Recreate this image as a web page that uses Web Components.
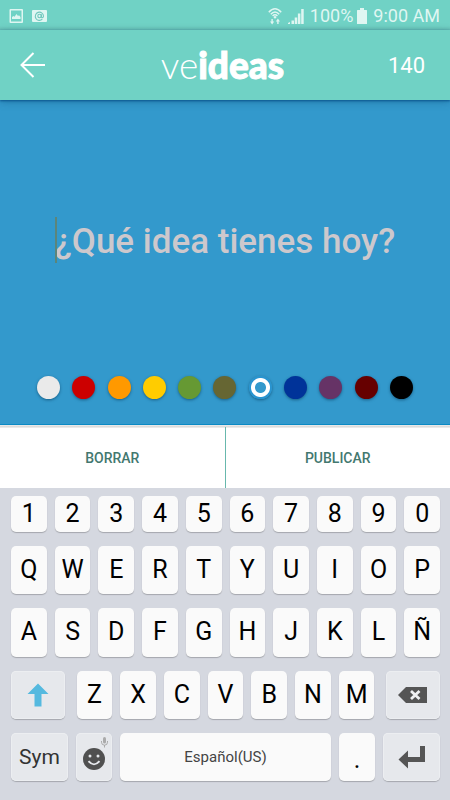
<!DOCTYPE html>
<html lang="es">
<head>
<meta charset="utf-8">
<meta name="viewport" content="width=device-width, initial-scale=1">
<title>veideas</title>
<style>
  html, body { height: 100%; margin: 0; }
  body { font-family: Roboto, "Liberation Sans", sans-serif; background: #d5d8e0; }
</style>
</head>
<body>
<idea-app></idea-app>

<template id="status-bar">
  <style>
    :host { display: flex; align-items: center; gap: 6px; height: 30px; padding: 1px 10px 0 9px; box-sizing: border-box; background: linear-gradient(#70d2c5 26px, #68bfb4); color: #dff6f2; font-size: 18px; line-height: 30px; white-space: nowrap; }
    svg { display: block; flex: none; }
    .mail { margin-left: 2px; }
    .push { margin-left: auto; }
    .pct { display: flex; align-items: center; gap: 4px; }
  </style>
  <svg width="15" height="16" viewBox="0 0 15 16"><path fill="#dff6f2" fill-rule="evenodd" d="M1.500 1h11.500a1 1 0 0 1 1 1v12a1 1 0 0 1-1 1H1.500a1 1 0 0 1-1-1V2a1 1 0 0 1 1-1zM2 2.500v11h10.500v-11z"/><path fill="#dff6f2" d="M3 11V9l1.500-1 1 .8L7.500 6l1.500 2 1-.8L11.500 9v2z"/></svg>
  <svg class="mail" width="15" height="14" viewBox="0 0 15 14"><rect y="1" width="15" height="12" rx="1" fill="#dff6f2"/><path fill="none" stroke="#70c8bd" stroke-width="1.100" d="M10.300 10.200A4.100 4.100 0 1 1 11.500 7c0 1.900-2.100 2.300-2.100.6V5.300"/><circle cx="7.500" cy="7" r="1.700" fill="none" stroke="#70c8bd" stroke-width="1.100"/></svg>
  <svg class="push" width="14" height="18" viewBox="0 0 14 18"><g fill="none" stroke="#dff6f2" stroke-width="1.500"><path d="M.8 5.300Q7-1.600 13.200 5.300M2.800 7.200Q7 2.600 11.200 7.200M4.600 9Q7 6.600 9.400 9"/></g><circle cx="7" cy="10.300" r="1.200" fill="#dff6f2"/><path fill="#dff6f2" d="M3.400 12h1.400v2.500h1.400L4.100 17.500 2 14.500h1.400zM9.200 17h1.400v-2.500H12L9.900 11.500 7.800 14.500h1.400z" /></svg>
  <svg width="16" height="16" viewBox="0 0 16 16" fill="#dff6f2"><path d="M0 16v-1l2-1v2zM3.500 12.500h2.500V16H3.500zM6.700 9.500h2.500V16H6.700zM9.900 5.500h2.500v10.500H9.900zM13.200 1h2.500v15h-2.500z"/></svg>
  <span class="pct">100%<svg width="10" height="16" viewBox="0 0 10 16"><path fill="#dff6f2" d="M3 0h4v2h2.500q.5 0 .5.500V16H0V2.500Q0 2 .5 2H3z"/></svg></span>
  <time>9:00 AM</time>
</template>

<template id="app-header">
  <style>
    :host { display: grid; grid-template-columns: 1fr auto 1fr; align-items: center; height: 70px; box-sizing: border-box; padding: 0 25px 0 20px; background: #70d2c5; color: #fff; position: relative; box-shadow: 0 1px 2px #0a5590, 0 2px 8px rgba(0,50,90,.3); }
    button { all: unset; cursor: pointer; width: 26px; height: 26px; }
    svg { display: block; }
    h1 { margin: 0; font: 300 37px/40px Lato, sans-serif; }
    h1 b { font-weight: 900; -webkit-text-stroke: 1px #fff; }
    output { justify-self: end; font-size: 22px; line-height: 26px; padding-top: 2px; }
  </style>
  <button type="button" aria-label="Volver"><svg width="26" height="26" viewBox="0 0 26 26" fill="none" stroke="#fff" stroke-width="2"><path d="M25 13H1.500M13.500 1L1.500 13l12 12"/></svg></button>
  <h1>ve<b>ideas</b></h1>
  <output aria-label="Caracteres restantes">140</output>
</template>

<template id="color-picker">
  <style>
    :host { display: block; }
    fieldset { border: 0; margin: 0; padding: 0; min-width: 0; display: flex; justify-content: space-between; }
    input { appearance: none; box-sizing: border-box; width: 23px; height: 23px; margin: 0; border-radius: 50%; background: var(--c); box-shadow: 0 1px 3px rgba(0,50,80,.55); }
    input:checked { background: radial-gradient(circle, #3399cc 5px, #fff 6px, #fff 9px, #2994d0 10px); }
  </style>
  <fieldset aria-label="Color de fondo"></fieldset>
</template>

<template id="idea-canvas">
  <style>
    :host { display: flex; flex-direction: column; height: 325px; box-sizing: border-box; padding: 0 37px 25px; background: #3399cc; border-bottom: 1px solid #0b8ac4; }
    .entry { flex: 1; display: flex; align-items: center; justify-content: center; padding-top: 8px; }
    .field { position: relative; width: 100%; }
    input { display: block; width: 100%; box-sizing: border-box; border: 0; padding: 0; background: none; outline: 0; text-align: center; font: 500 35px/46px Roboto, sans-serif; height: 46px; color: #fff; }
    input::placeholder { color: #cdc8cc; opacity: 1; }
    .caret { position: absolute; left: 18px; bottom: 2px; width: 2px; height: 46px; background: #5c8579; }
  </style>
  <div class="entry"><div class="field"><input type="text" maxlength="140" aria-label="Tu idea" placeholder="¿Qué idea tienes hoy?"><span class="caret"></span></div></div>
  <color-picker></color-picker>
</template>

<template id="action-bar">
  <style>
    :host { display: flex; height: 63px; box-sizing: border-box; padding-top: 2px; background: linear-gradient(#eee, #d5d5d5 2px, #fff 3px); }
    button { flex: 1; border: 0; margin: 0; padding: 0; background: none; color: #43786f; font: 500 14px/20px Roboto, sans-serif; cursor: pointer; }
    button + button { border-left: 1px solid #68b8ad; }
  </style>
  <button type="button">BORRAR</button><button type="button">PUBLICAR</button>
</template>

<template id="key-cap">
  <style>
    :host { display: flex; flex: var(--grow, 1) 1 0; min-width: 0; }
    button { flex: 1; min-width: 0; display: flex; align-items: center; justify-content: center; position: relative; border: 0; margin: 0; padding: 0; border-radius: 5px; background: #fafafa; color: #000; font: 400 25px/30px Roboto, sans-serif; box-shadow: 0 1px 1px #a5a7ad; cursor: pointer; }
    :host([tone="dark"]) button { background: #e6e8ec; color: #333; font-size: 21px; box-shadow: 0 1px 1px #a5a7ad, inset 0 0 0 1px #eceef1; }
    :host([tone="space"]) button { color: #444; font-size: 15px; }
    :host([tone="dot"]) button { padding-top: 6px; }
    :host([edge="start"]) { margin-right: 4px; }
    :host([edge="end"]) { margin-left: 4px; }
    ::slotted(svg) { display: block; flex: none; }
    ::slotted(svg.hint) { position: absolute; top: 4px; right: 4px; }
  </style>
  <button type="button"><slot></slot></button>
</template>

<template id="key-board">
  <style>
    :host { display: grid; grid-template-rows: 36px repeat(4, 1fr); gap: 14px; flex: 1; box-sizing: border-box; padding: 8px 10px 19px 11px; background: #d5d8e0; }
    .row { display: flex; gap: 8px; }
  </style>
  <div class="row" data-keys="1234567890"></div>
  <div class="row" data-keys="QWERTYUIOP"></div>
  <div class="row" data-keys="ASDFGHJKLÑ"></div>
  <div class="row">
    <key-cap tone="dark" edge="start" style="--grow:1.5" label="Mayúsculas"><svg width="22" height="24" viewBox="0 0 22 24"><path fill="#55b9df" d="M11 .5L21.500 11h-7v12.500h-7V11h-7z"/></svg></key-cap>
    <key-cap>Z</key-cap><key-cap>X</key-cap><key-cap>C</key-cap><key-cap>V</key-cap><key-cap>B</key-cap><key-cap>N</key-cap><key-cap>M</key-cap>
    <key-cap tone="dark" edge="end" style="--grow:1.5" label="Retroceso"><svg width="30" height="16" viewBox="0 0 30 16"><path fill="#555" d="M8 0h21v16H8L0 8z"/><path stroke="#f0f1f3" stroke-width="2.800" d="M13 4l8.500 8M21.500 4L13 12"/></svg></key-cap>
  </div>
  <div class="row">
    <key-cap tone="dark" style="--grow:57">Sym</key-cap>
    <key-cap tone="dark" style="--grow:36" label="Emoji"><svg width="22" height="28" viewBox="0 0 22 28"><circle cx="11" cy="16" r="11" fill="#505050"/><circle cx="7" cy="13" r="1.500" fill="#e6e8ec"/><circle cx="15" cy="13" r="1.500" fill="#e6e8ec"/><path d="M5.500 18.200Q11 24.500 16.500 18.200" fill="none" stroke="#e6e8ec" stroke-width="1.800"/></svg><svg class="hint" width="7" height="11" viewBox="0 0 7 11"><rect x="2" width="3" height="6.500" rx="1.500" fill="#aaa"/><path d="M.5 4v1.200a3 3 0 0 0 6 0V4M3.500 8v2.500" fill="none" stroke="#aaa"/></svg></key-cap>
    <key-cap tone="space" style="--grow:211">Español(US)</key-cap>
    <key-cap tone="dot" style="--grow:36">.</key-cap>
    <key-cap tone="dark" style="--grow:57" label="Intro"><svg width="28" height="24" viewBox="0 0 28 24"><path fill="#555" d="M22 1h5v16H10v6.500L.5 14.500 10 5.500V12h12z"/></svg></key-cap>
  </div>
</template>

<template id="idea-app">
  <style>
    :host { display: flex; flex-direction: column; min-height: 100%; }
  </style>
  <status-bar></status-bar>
  <app-header></app-header>
  <idea-canvas></idea-canvas>
  <action-bar></action-bar>
  <key-board></key-board>
</template>

<script>
  class Base extends HTMLElement {
    constructor() {
      super();
      const t = document.getElementById(this.localName);
      this.attachShadow({ mode: 'open' }).append(t.content.cloneNode(true));
    }
  }
  class KeyCap extends Base {
    connectedCallback() {
      const label = this.getAttribute('label');
      if (label) this.shadowRoot.querySelector('button').setAttribute('aria-label', label);
    }
  }
  class ColorPicker extends Base {
    connectedCallback() {
      const set = this.shadowRoot.querySelector('fieldset');
      if (set.children.length) return;
      const colors = [['Blanco','#eaeaea'],['Rojo','#cc0000'],['Naranja','#ff9900'],['Amarillo','#ffcc00'],['Verde','#669933'],['Oliva','#666633'],['Celeste','#3399cc'],['Azul','#003399'],['Morado','#663366'],['Granate','#660000'],['Negro','#000000']];
      for (const [name, value] of colors) {
        const r = document.createElement('input');
        r.type = 'radio';
        r.name = 'color';
        r.value = value;
        r.setAttribute('aria-label', name);
        r.style.setProperty('--c', value);
        r.checked = name === 'Celeste';
        set.append(r);
      }
    }
  }
  class KeyBoard extends Base {
    connectedCallback() {
      for (const row of this.shadowRoot.querySelectorAll('[data-keys]')) {
        if (row.children.length) continue;
        for (const ch of row.dataset.keys) {
          const k = document.createElement('key-cap');
          k.textContent = ch;
          row.append(k);
        }
      }
    }
  }
  customElements.define('key-cap', KeyCap);
  customElements.define('color-picker', ColorPicker);
  customElements.define('status-bar', class extends Base {});
  customElements.define('app-header', class extends Base {});
  customElements.define('idea-canvas', class extends Base {});
  customElements.define('action-bar', class extends Base {});
  customElements.define('key-board', KeyBoard);
  customElements.define('idea-app', class extends Base {});
</script>
</body>
</html>
